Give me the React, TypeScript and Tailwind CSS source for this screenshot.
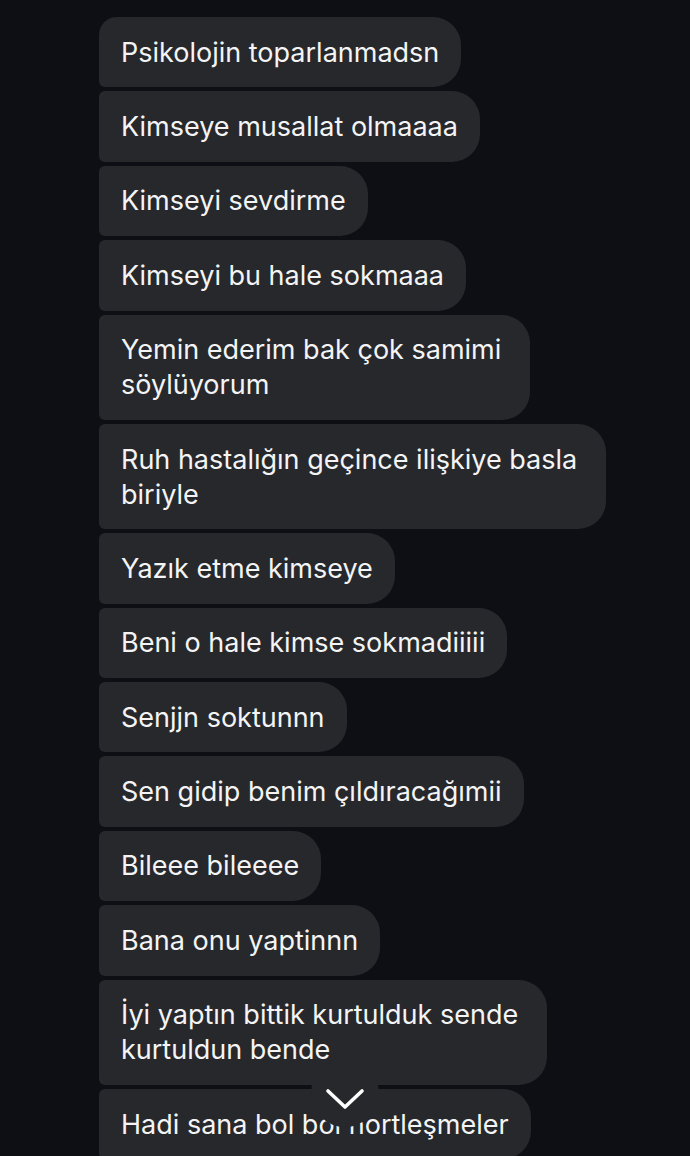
import React from "react";

type Msg = { lines: string[] };

const messages: Msg[] = [
  { lines: ["Psikolojin toparlanmadsn"] },
  { lines: ["Kimseye musallat olmaaaa"] },
  { lines: ["Kimseyi sevdirme"] },
  { lines: ["Kimseyi bu hale sokmaaa"] },
  { lines: ["Yemin ederim bak çok samimi", "söylüyorum"] },
  { lines: ["Ruh hastalığın geçince ilişkiye basla", "biriyle"] },
  { lines: ["Yazık etme kimseye"] },
  { lines: ["Beni o hale kimse sokmadiiiii"] },
  { lines: ["Senjjn soktunnn"] },
  { lines: ["Sen gidip benim çıldıracağımii"] },
  { lines: ["Bileee bileeee"] },
  { lines: ["Bana onu yaptinnn"] },
  { lines: ["İyi yaptın bittik kurtulduk sende", "kurtuldun bende"] },
];

function Bubble({ lines, first }: { lines: string[]; first?: boolean }) {
  const multi = lines.length > 1;
  return (
    <div
      className={
        "self-start bg-[#26282c] text-[#f4f4f5] text-[27px] leading-[35px] pl-[22px] py-[17.7px] rounded-r-[28px] " +
        (multi ? "pr-[29px] " : "pr-[22px] ") +
        (first ? "rounded-tl-[18px] rounded-bl-[6px]" : "rounded-l-[6px]")
      }
    >
      {lines.map((l, i) => (
        <div key={i} className="whitespace-nowrap">
          {l}
        </div>
      ))}
    </div>
  );
}

export default function App() {
  return (
    <div
      className="w-[690px] h-[1156px] overflow-hidden bg-[#0d0f14]"
      style={{ fontFamily: "Inter, 'Noto Sans', sans-serif" }}
    >
      <div className="flex flex-col gap-[4px] pl-[99px] pt-[17px]">
        {messages.map((m, i) => (
          <Bubble key={i} lines={m.lines} first={i === 0} />
        ))}
        <div className="relative self-start">
          <Bubble lines={["Hadi sana bol bol hortleşmeler"]} />
          <div className="absolute left-[212px] top-[-30px] w-[68px] h-[68px] rounded-full bg-[#26282c] flex items-start justify-center pt-[29px]">
            <svg width="40" height="22" viewBox="0 0 40 22" fill="none">
              <polyline
                points="3,3 20,19 37,3"
                stroke="#ffffff"
                strokeWidth="3.6"
                strokeLinecap="round"
                strokeLinejoin="round"
              />
            </svg>
          </div>
        </div>
      </div>
    </div>
  );
}
